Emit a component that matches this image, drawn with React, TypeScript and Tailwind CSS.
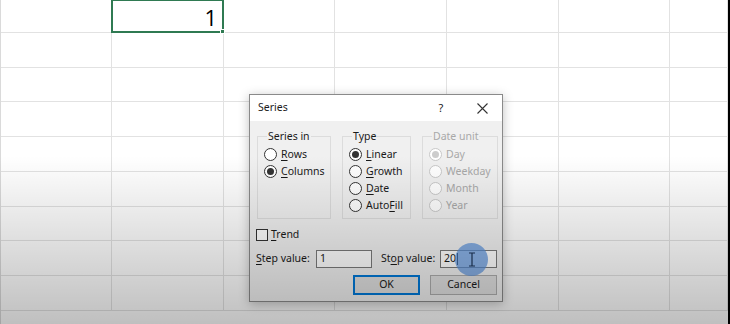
import React from 'react';

const font = { fontFamily: '"Noto Sans", "Open Sans", sans-serif' };

const colWidths = 'grid-cols-[111px_112px_111px_112px_112px_111px_58px]';
const rowHeights = 'grid-rows-[33px_35px_34px_35px_35px_35px_34px_35px_35px]';

const Radio = ({ checked, disabled }: { checked?: boolean; disabled?: boolean }) => (
    <span
        className={`flex h-[13px] w-[13px] shrink-0 items-center justify-center rounded-full border bg-white ${
            disabled ? 'border-[#c8c8c8]' : 'border-[#333333]'
        }`}
    >
        {checked && (
            <span className={`h-[7px] w-[7px] rounded-full ${disabled ? 'bg-[#cccccc]' : 'bg-[#333333]'}`} />
        )}
    </span>
);

// label with an underlined accelerator letter
const Acc = ({ pre = '', u, post = '' }: { pre?: string; u: string; post?: string }) => (
    <span>
        {pre}
        <span className="underline underline-offset-2">{u}</span>
        {post}
    </span>
);

const RadioRow = ({ children, checked, disabled }: { children: React.ReactNode; checked?: boolean; disabled?: boolean }) => (
    <div className={`flex h-[17px] items-center gap-[4px] ${disabled ? 'text-[#a8a8a8]' : 'text-[#1a1a1a]'}`}>
        <Radio checked={checked} disabled={disabled} />
        {children}
    </div>
);

const Group = ({ title, width, disabled, children }: { title: string; width: string; disabled?: boolean; children: React.ReactNode }) => (
    <fieldset className={`${width} h-[90px] shrink-0 border border-[#dcdcdc] pl-[6px]`}>
        <legend className={`ml-[3px] px-[1px] leading-[14px] ${disabled ? 'text-[#a8a8a8]' : 'text-[#1a1a1a]'}`}>{title}</legend>
        <div className="pt-[3px]">{children}</div>
    </fieldset>
);

const SeriesDialog = () => (
    <div
        className="absolute left-[249px] top-[94px] flex h-[208px] w-[254px] flex-col border border-[#8a8a8a] bg-[#f0f0f0] text-[10.5px] shadow-[0_2px_10px_rgba(0,0,0,0.25)]"
        style={font}
    >
        {/* Title bar */}
        <div className="flex h-[26px] items-center bg-white pl-[8px] text-[#1a1a1a]">
            <span className="flex-1">Series</span>
            <span className="w-[14px] text-center text-[11px]">?</span>
            <span className="w-[14px]" />
            <span className="flex w-[40px] justify-center">
                <svg width="11" height="11" viewBox="0 0 11 11" stroke="#333" strokeWidth="1.1">
                    <path d="M0.5 0.5 L10.5 10.5 M10.5 0.5 L0.5 10.5" />
                </svg>
            </span>
        </div>

        {/* Body */}
        <div className="flex flex-1 flex-col pl-[6px] pr-[4px] pt-[8px]">
            <div className="ml-[1px] flex gap-[11px]">
                <Group title="Series in" width="w-[74px]">
                    <RadioRow><Acc u="R" post="ows" /></RadioRow>
                    <RadioRow checked><Acc u="C" post="olumns" /></RadioRow>
                </Group>
                <Group title="Type" width="w-[69px]">
                    <RadioRow checked><Acc u="L" post="inear" /></RadioRow>
                    <RadioRow><Acc u="G" post="rowth" /></RadioRow>
                    <RadioRow><Acc u="D" post="ate" /></RadioRow>
                    <RadioRow><Acc pre="Auto" u="F" post="ill" /></RadioRow>
                </Group>
                <Group title="Date unit" width="w-[76px]" disabled>
                    <RadioRow checked disabled>Day</RadioRow>
                    <RadioRow disabled>Weekday</RadioRow>
                    <RadioRow disabled>Month</RadioRow>
                    <RadioRow disabled>Year</RadioRow>
                </Group>
            </div>

            {/* Trend */}
            <div className="mt-[10px] flex h-[12px] items-center gap-[3px] text-[#1a1a1a]">
                <span className="h-[12px] w-[12px] border border-[#333333] bg-white" />
                <Acc u="T" post="rend" />
            </div>

            {/* Step / Stop */}
            <div className="mt-[9px] flex h-[18px] items-center text-[#1a1a1a]">
                <span className="w-[60px] shrink-0"><Acc u="S" post="tep value:" /></span>
                <div className="flex h-[18px] w-[56px] shrink-0 items-center border border-[#7a7a7a] bg-white pl-[3px]">1</div>
                <span className="ml-[9px] w-[59px] shrink-0"><Acc pre="St" u="o" post="p value:" /></span>
                <div className="relative flex h-[18px] w-[57px] shrink-0 items-center border border-[#7a7a7a] bg-white pl-[3px]">
                    20<span className="ml-[1px] h-[12px] w-px bg-black" />
                    {/* click highlight with I-beam */}
                    <span className="absolute left-[14px] top-[-8px] flex h-[33px] w-[33px] items-center justify-center rounded-full bg-[#5790dc]/70">
                        <svg width="8" height="15" viewBox="0 0 8 15" stroke="#1d3557" strokeWidth="1.2" fill="none">
                            <path d="M1 1 H7 M4 1 V14 M1 14 H7" />
                        </svg>
                    </span>
                </div>
            </div>

            {/* Buttons */}
            <div className="mt-[7px] flex justify-end gap-[10px] pr-[1px]">
                <button className="flex h-[20px] w-[67px] items-center justify-center border-2 border-[#0078d7] bg-[#e1e1e1] text-[#1a1a1a]">
                    OK
                </button>
                <button className="flex h-[20px] w-[67px] items-center justify-center border border-[#adadad] bg-[#e1e1e1] text-[#1a1a1a]">
                    Cancel
                </button>
            </div>
        </div>
    </div>
);

export default function App() {
    const cells = Array.from({ length: 9 * 7 }, (_, i) => i);

    return (
        <div className="relative h-[324px] w-[730px] overflow-hidden bg-white">
            <div className="flex h-full">
                {/* Spreadsheet grid */}
                <div className={`grid ${colWidths} ${rowHeights} border-l border-[#dadada]`}>
                    {cells.map(i => {
                        const row = Math.floor(i / 7);
                        const col = i % 7;
                        if (row === 0 && col === 1) {
                            return (
                                <div
                                    key={i}
                                    className="relative -ml-px -mt-px flex items-end justify-end border-2 border-[#2f7a52] pb-[3px] pr-[5px] text-[22px] leading-none text-black"
                                    style={{ fontFamily: '"Open Sans", "Noto Sans", sans-serif' }}
                                >
                                    1
                                    <span className="absolute -bottom-[3px] -right-[3px] h-[5px] w-[5px] border border-white bg-[#2f7a52]" />
                                </div>
                            );
                        }
                        return <div key={i} className="border-b border-r border-[#e2e2e2]" />;
                    })}
                </div>
                <div className="flex-1 bg-black" />
            </div>

            <SeriesDialog />

            {/* video bottom shade */}
            <div className="pointer-events-none absolute inset-x-0 bottom-0 h-[168px] bg-linear-to-b from-transparent to-black/25" />
        </div>
    );
}
